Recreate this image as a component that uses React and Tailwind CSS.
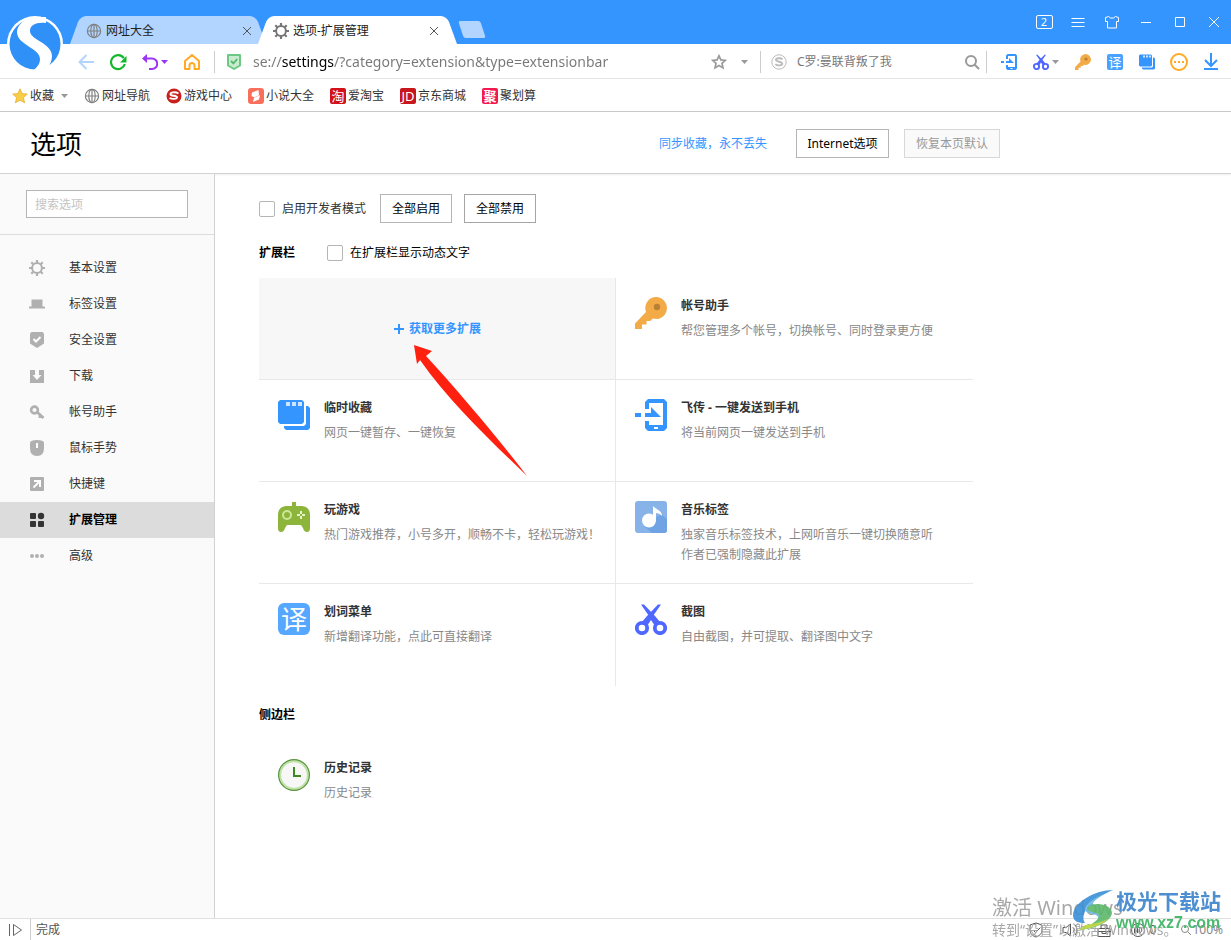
import { useState } from 'react';
import clsx from 'clsx';

const bookmarks = [
  { name: '网址导航', icon: <GlobeIcon /> },
  { name: '游戏中心', icon: <GameCenterIcon /> },
  { name: '小说大全', icon: <NovelIcon /> },
  { name: '爱淘宝', icon: <TextBadge className="bg-[#d3111b] text-[13px]">淘</TextBadge> },
  { name: '京东商城', icon: <TextBadge className="bg-[#c8161d] text-[13px]">JD</TextBadge> },
  { name: '聚划算', icon: <TextBadge className="bg-[#f5174f] text-[13px] font-bold">聚</TextBadge> },
];

const menu = [
  { id: 'basic', name: '基本设置', icon: <GearIcon className="size-4" /> },
  { id: 'tabs', name: '标签设置', icon: <TabShapeIcon /> },
  { id: 'security', name: '安全设置', icon: <ShieldSolidIcon /> },
  { id: 'download', name: '下载', icon: <DownloadBoxIcon /> },
  { id: 'account', name: '帐号助手', icon: <SmallKeyIcon /> },
  { id: 'gesture', name: '鼠标手势', icon: <MouseIcon /> },
  { id: 'shortcut', name: '快捷键', icon: <ShortcutIcon /> },
  { id: 'extension', name: '扩展管理', icon: <BlocksIcon /> },
  { id: 'advanced', name: '高级', icon: <DotsIcon /> },
];

const extensions = [
  { name: '帐号助手', lines: ['帮您管理多个帐号，切换帐号、同时登录更方便'], icon: <KeyIcon className="size-8" /> },
  { name: '临时收藏', lines: ['网页一键暂存、一键恢复'], icon: <StashIcon className="size-8" /> },
  { name: '飞传 - 一键发送到手机', lines: ['将当前网页一键发送到手机'], icon: <PhoneIcon className="size-8" /> },
  { name: '玩游戏', lines: ['热门游戏推荐，小号多开，顺畅不卡，轻松玩游戏！'], icon: <GamepadIcon /> },
  { name: '音乐标签', lines: ['独家音乐标签技术，上网听音乐一键切换随意听', '作者已强制隐藏此扩展'], icon: <MusicIcon /> },
  {
    name: '划词菜单',
    lines: ['新增翻译功能，点此可直接翻译'],
    icon: (
      <span className="flex size-8 items-center justify-center rounded-md bg-[#55a7ff] text-[26px] leading-8 text-white">
        译
      </span>
    ),
  },
  { name: '截图', lines: ['自由截图，并可提取、翻译图中文字'], icon: <ScissorsIcon className="size-8" /> },
];

export default function App() {
  return (
    <div className="flex min-h-screen flex-col bg-white font-['Noto_Sans','Noto_Sans_CJK_SC',sans-serif] text-xs text-[#333]">
      <header className="relative">
        <TitleBar />
        <Toolbar />
        <BookmarkBar />
        <LogoIcon />
      </header>

      <PageHeader />

      <div className="flex flex-1">
        <Sidebar />
        <Extensions />
      </div>

      <StatusBar />
      <Watermark />
    </div>
  );
}

function TitleBar() {
  return (
    <div className="flex h-11 items-end bg-[#3595ff] pl-[70px]">
      <Tab title="网址大全" icon={<GlobeIcon />} />
      <Tab title="选项-扩展管理" icon={<GearIcon className="size-4 text-[#777]" />} active />
      <button
        type="button"
        aria-label="新建标签"
        className="mb-1.5 ml-1 h-[17px] w-[22px] skew-x-[18deg] rounded-xs bg-[#b1d5ff]"
      />
      <div className="ml-auto flex h-full text-white">
        <WindowButton label="窗口">
          <span className="flex h-[14px] w-[17px] items-center justify-center rounded-xs border border-white text-[11px] leading-3">
            2
          </span>
        </WindowButton>
        <WindowButton label="菜单">
          <LineIcon d="M1.500 4.500h13M1.500 8.500h13M1.500 12.500h13" />
        </WindowButton>
        <WindowButton label="皮肤">
          <LineIcon d="M4.500 2.500l-3 1V7.500h2v6.500h9v-6.500h2v-4l-3-1-2 1.500h-3z" />
        </WindowButton>
        <WindowButton label="最小化">
          <LineIcon d="M3 8.500h10" />
        </WindowButton>
        <WindowButton label="最大化">
          <LineIcon d="M3.500 3.500h9v9h-9z" />
        </WindowButton>
        <WindowButton label="关闭">
          <LineIcon d="M3 3l10 10M13 3L3 13" />
        </WindowButton>
      </div>
    </div>
  );
}

function Tab({ title, icon, active }) {
  return (
    <div
      className={clsx(
        'relative isolate flex h-7 items-center gap-1 pt-0.5',
        'before:absolute before:inset-y-0 before:right-8 before:left-0 before:-z-10 before:origin-bottom before:-skew-x-[20deg] before:rounded-tl-md',
        'after:absolute after:inset-y-0 after:right-0 after:left-8 after:-z-10 after:origin-bottom after:skew-x-[20deg] after:rounded-tr-md',
        active
          ? '-ml-2 w-[199px] pr-[15px] pl-[15px] text-[#222] before:bg-white after:bg-white'
          : 'w-[196px] pr-[11px] pl-4 text-[#222] before:bg-[#b1d5ff] after:bg-[#b1d5ff]'
      )}
    >
      {icon}
      <span className="flex-1">{title}</span>
      <button type="button" aria-label={`关闭 ${title}`} className="text-[#555]">
        <LineIcon d="M4 4l8 8M12 4l-8 8" />
      </button>
    </div>
  );
}

function WindowButton({ label, children }) {
  return (
    <button type="button" aria-label={label} className="flex w-[34px] items-center justify-center">
      {children}
    </button>
  );
}

function ToolButton({ label, wide, children }) {
  return (
    <button
      type="button"
      aria-label={label}
      className={clsx('flex h-5 shrink-0 items-center', wide ? 'w-[26px] justify-between' : 'w-4 justify-center')}
    >
      {children}
    </button>
  );
}

function Toolbar() {
  const [url, setUrl] = useState('se://settings/?category=extension&type=extensionbar');

  return (
    <div className="flex h-[35px] items-center border-b border-[#e5e5e5] pt-px pl-[78px]">
      <div className="flex items-center gap-4">
        <ToolButton label="后退">
          <svg viewBox="0 0 16 16" className="size-4 shrink-0 text-[#b1d5ff]" fill="none" stroke="currentColor" strokeWidth="2">
            <path d="M8.500 1L1.500 8l7 7M2 8h14" />
          </svg>
        </ToolButton>
        <ToolButton label="刷新">
          <svg viewBox="0 0 18 18" className="size-[18px] shrink-0" fill="none" stroke="#12b72b" strokeWidth="2.200">
            <path d="M14.800 5.200A7 7 0 1 0 15.800 11" />
            <path d="M17.500 3v6.500H11z" fill="#12b72b" stroke="none" />
          </svg>
        </ToolButton>
        <ToolButton label="恢复标签" wide>
          <svg viewBox="0 0 16 16" className="size-4 shrink-0" fill="none" stroke="#9a35f5" strokeWidth="2">
            <path d="M3 4.500h7a4.800 4.800 0 0 1 0 10.500H7" />
            <path d="M0 4.500L5 0v9z" fill="#9a35f5" stroke="none" />
          </svg>
          <Caret className="text-[#9a35f5]" />
        </ToolButton>
        <ToolButton label="主页">
          <svg viewBox="0 0 16 16" className="size-4 shrink-0" fill="none" stroke="#ffaa22" strokeWidth="2">
            <path d="M1 7L8 1l7 6v8h-4.500v-3.500a2.500 2.500 0 0 0-5 0V15H1z" strokeLinejoin="round" />
          </svg>
        </ToolButton>
      </div>

      <Divider className="ml-3.5" />

      <div className="flex min-w-0 flex-1 items-center pl-3">
        <svg viewBox="0 0 14 16" className="h-4 w-3.5 shrink-0">
          <path d="M1 1h12v10.500L7 15l-6-3.500z" fill="#c9ecd0" stroke="#6cc882" strokeWidth="2" strokeLinejoin="round" />
          <path d="M4 7l2.400 2.400L10.200 5" fill="none" stroke="#52b96c" strokeWidth="1.800" />
        </svg>
        <input
          type="text"
          aria-label="地址"
          value={url}
          onChange={(event) => setUrl(event.target.value)}
          className="ml-3 min-w-0 flex-1 bg-[linear-gradient(to_right,#777_28px,#000_28px,#000_81px,#777_81px)] bg-clip-text text-sm text-transparent caret-black outline-none"
        />
        <button type="button" aria-label="收藏" className="text-[#999]">
          <svg viewBox="0 0 16 16" className="size-4" fill="none" stroke="currentColor" strokeWidth="1.700">
            <path d="M8 1.800l1.900 4.100 4.500.5-3.400 3 1 4.500L8 11.600l-4 2.300 1-4.500-3.400-3 4.500-.5z" />
          </svg>
        </button>
        <button type="button" aria-label="更多地址" className="mr-3 ml-3.5 text-[#999]">
          <Caret />
        </button>
      </div>

      <Divider />

      <div className="flex w-[225px] items-center pr-1.5 pl-2.5">
        <svg viewBox="0 0 16 16" className="size-4 shrink-0" fill="none" stroke="#bbb">
          <circle cx="8" cy="8" r="7.200" />
          <path d="M11.500 5.200C9.500 3.500 4.800 4 5 6c.2 2 6 1.500 6.200 3.600.1 2.100-4.700 2.400-6.900.7" strokeWidth="2" />
        </svg>
        <input
          type="text"
          aria-label="搜索"
          placeholder="C罗:曼联背叛了我"
          className="ml-2.5 min-w-0 flex-1 outline-none placeholder:text-[#777]"
        />
        <button type="button" aria-label="搜索网页" className="text-[#999]">
          <svg viewBox="0 0 16 16" className="size-4" fill="none" stroke="currentColor" strokeWidth="2">
            <circle cx="7" cy="7" r="5" />
            <path d="M10.500 10.500l4.500 4.500" />
          </svg>
        </button>
      </div>

      <Divider />

      <div className="flex items-center gap-4 pr-3 pl-3.5">
        <ToolButton label="飞传">
          <PhoneIcon className="size-4" />
        </ToolButton>
        <ToolButton label="截图" wide>
          <ScissorsIcon className="size-4" />
          <Caret className="text-[#999]" />
        </ToolButton>
        <ToolButton label="帐号助手">
          <KeyIcon className="size-4" />
        </ToolButton>
        <ToolButton label="翻译">
          <TextBadge className="bg-[#4ba1ff] text-[13px]">译</TextBadge>
        </ToolButton>
        <ToolButton label="临时收藏">
          <StashIcon className="size-4" />
        </ToolButton>
        <ToolButton label="更多扩展">
          <svg viewBox="0 0 18 18" className="size-[18px] shrink-0" fill="#ffaa22">
            <circle cx="9" cy="9" r="8" fill="none" stroke="#ffaa22" strokeWidth="2" />
            <path d="M4 8h2v2H4zM8 8h2v2H8zM12 8h2v2h-2z" />
          </svg>
        </ToolButton>
        <ToolButton label="下载">
          <svg viewBox="0 0 16 18" className="h-[18px] w-4 shrink-0" fill="none" stroke="#3595ff" strokeWidth="2">
            <path d="M8 0v12.500M2 7l6 6 6-6M1 16h14" />
          </svg>
        </ToolButton>
      </div>
    </div>
  );
}

function BookmarkBar() {
  return (
    <nav aria-label="收藏栏" className="flex h-[33px] items-center gap-4 border-b border-[#c8c8c8] pt-px pl-3">
      <button type="button" className="flex items-center">
        <svg viewBox="0 0 16 16" className="size-4">
          <path
            d="M8 .8l2.100 4.800 5.200.5-3.900 3.500 1.200 5.200L8 12.100l-4.600 2.700 1.200-5.200L.7 6.100l5.200-.5z"
            fill="#f9cd45"
            stroke="#e6ae2e"
            strokeWidth=".8"
          />
        </svg>
        <span className="ml-0.5 leading-5">收藏</span>
        <Caret className="ml-[7px] text-[#999]" />
      </button>
      {bookmarks.map((item) => (
        <a key={item.name} href="#" className="flex items-center gap-0.5 leading-5">
          {item.icon}
          {item.name}
        </a>
      ))}
    </nav>
  );
}

function PageHeader() {
  return (
    <div className="border-b border-[#d2d2d2] shadow-[0_1px_2px_#eee]">
      <div className="flex h-[61px] max-w-[1000px] items-center pt-0.5 pl-[30px]">
        <h1 className="flex-1 text-[26px] leading-8 text-black">选项</h1>
        <a href="#" className="mr-[29px] text-[#3595ff]">
          同步收藏，永不丢失
        </a>
        <button type="button" className="h-[29px] w-[93px] border border-[#b5b5b5] text-black">
          Internet选项
        </button>
        <button type="button" disabled className="ml-[15px] h-[29px] w-24 border border-[#d8d8d8] bg-[#fafafa] text-[#999]">
          恢复本页默认
        </button>
      </div>
    </div>
  );
}

function Sidebar() {
  const [current, setCurrent] = useState('extension');

  return (
    <aside className="w-[215px] shrink-0 border-r border-[#d2d2d2] bg-[#fafafa]">
      <div className="border-b border-[#ddd] py-4 pr-[26px] pl-[26px]">
        <input
          type="text"
          aria-label="搜索选项"
          placeholder="搜索选项"
          className="block h-7 w-full border border-[#b5b5b5] bg-white px-2 outline-none placeholder:text-[#c4c4c4]"
        />
      </div>
      <nav aria-label="选项分类" className="pt-[15px]">
        {menu.map((item) => {
          const active = item.id === current;
          return (
            <button
              key={item.id}
              type="button"
              onClick={() => setCurrent(item.id)}
              className={clsx(
                'flex h-9 w-full items-center gap-6 pl-[29px]',
                active ? 'bg-[#dcdcdc] font-bold text-black' : 'text-[#333]'
              )}
            >
              <span className={active ? 'text-[#333]' : 'text-[#b0b0b0]'}>{item.icon}</span>
              {item.name}
            </button>
          );
        })}
      </nav>
    </aside>
  );
}

function Extensions() {
  return (
    <main className="min-w-0 flex-1 pt-5 pl-11">
      <div className="flex items-center">
        <Checkbox id="dev-mode" label="启用开发者模式" />
        <button type="button" className="ml-3.5 h-[29px] w-[72px] border border-[#b5b5b5] text-black">
          全部启用
        </button>
        <button type="button" className="ml-3 h-[29px] w-[72px] border border-[#a5a5a5] text-black">
          全部禁用
        </button>
      </div>

      <section>
        <div className="mt-5 flex h-5 items-center text-black">
          <h2 className="w-[68px] font-bold">扩展栏</h2>
          <Checkbox id="dynamic-text" label="在扩展栏显示动态文字" />
        </div>
        <div className="relative mt-[15px] max-w-[714px]">
          <div className="grid grid-cols-2 *:h-[102px] *:border-[#e8e8e8] *:odd:border-r [&>*:nth-child(-n+6)]:border-b">
            <button type="button" className="flex items-center justify-center gap-1 bg-[#f7f7f7] font-bold text-[#3595ff]">
              <svg viewBox="0 0 12 12" className="size-3" fill="none" stroke="currentColor" strokeWidth="2">
                <path d="M6 1v10M1 6h10" />
              </svg>
              获取更多扩展
            </button>
            {extensions.map((item) => (
              <ExtensionItem key={item.name} {...item} />
            ))}
          </div>
          <PointerArrow />
        </div>
      </section>

      <section className="pt-5">
        <h2 className="leading-[18px] font-bold text-black">侧边栏</h2>
        <div className="mt-4 max-w-[357px]">
          <ExtensionItem name="历史记录" lines={['历史记录']} icon={<ClockIcon />} />
        </div>
      </section>
    </main>
  );
}

function ExtensionItem({ name, lines, icon }) {
  return (
    <article className="flex gap-3.5 pt-[19px] pl-[19px]">
      <div className="shrink-0">{icon}</div>
      <div>
        <h3 className="leading-[18px] font-bold">{name}</h3>
        <div className="mt-1.5 leading-5 text-[#888]">
          {lines.map((line) => (
            <p key={line}>{line}</p>
          ))}
        </div>
      </div>
    </article>
  );
}

function Checkbox({ id, label }) {
  return (
    <div className="flex items-center">
      <input
        id={id}
        type="checkbox"
        className="size-4 appearance-none rounded-xs border border-[#b5b5b5] bg-white checked:bg-[#3595ff]"
      />
      <label htmlFor={id} className="ml-[7px]">
        {label}
      </label>
    </div>
  );
}

function StatusBar() {
  return (
    <footer className="flex h-[22px] items-center border-t border-[#e0e0e0] pl-2 text-[#555]">
      <svg viewBox="0 0 16 14" className="h-3.5 w-4" fill="none" stroke="#666">
        <path d="M1.500 1v12M5.500 1.500v11L13.500 7z" />
      </svg>
      <Divider className="mr-[5px] ml-1.5" />
      <span>完成</span>
      <div className="ml-auto flex items-center gap-[18px] pr-2">
        <svg viewBox="0 0 16 16" className="size-4" fill="none" stroke="currentColor">
          <path d="M8 1l6 2v5c0 4-3 6-6 7-3-1-6-3-6-7V3zM5 8l2.500 2.500L12 6" />
        </svg>
        <svg viewBox="0 0 16 16" className="size-4" fill="none" stroke="currentColor">
          <path d="M1 5.500h3L8.500 2v12L4 10.500H1zM11 5.500c1.500 1.500 1.500 3.500 0 5M13 3c2.500 3 2.500 7 0 10" />
        </svg>
        <svg viewBox="0 0 16 16" className="size-4" fill="none" stroke="currentColor">
          <path d="M2 6.500h12v8H2zM5 6V3h6v3M1 9.500h14M6 9v2.500h4V9" />
        </svg>
        <span className="flex items-center gap-1">
          <svg viewBox="0 0 16 16" className="size-4" fill="none" stroke="currentColor">
            <circle cx="8" cy="8" r="6.500" />
            <path d="M4.500 11V7a1.500 1.500 0 0 1 3 0v4M4.500 9h3M9.500 5.500v5c3 0 3-5 0-5z" />
          </svg>
          0
        </span>
        <span className="flex items-center pl-1.5 text-[#888]">
          <svg viewBox="0 0 12 12" className="size-3" fill="none" stroke="currentColor">
            <circle cx="5" cy="5" r="3.500" />
            <path d="M7.500 7.500L11 11" />
          </svg>
          100%
        </span>
      </div>
    </footer>
  );
}

function Watermark() {
  return (
    <div className="pointer-events-none fixed right-0 bottom-0 h-[52px] w-[239px] overflow-hidden">
      <div className="whitespace-nowrap text-[#a8a8a8]">
        <p className="pt-2 text-xl leading-6">激活 Windows</p>
        <p className="text-sm leading-5">转到“设置”以激活 Windows。</p>
      </div>
      <div className="absolute top-0 right-2.5 flex items-start gap-px">
        <svg viewBox="0 0 44 44" className="h-11 w-11 opacity-90">
          <path d="M42 2C24 2 3 14 2 27c0 7 6 8 12 8C8 26 20 11 42 2z" fill="#3a8fd6" />
          <path d="M38 4C26 8 15 15 14 21c-1 5 12 4 13 8 1 3-3 6-8 9 10-1 17-8 17-14-1-5-14-4-14-8 0-3 6-8 16-12z" fill="#6ab7e8" />
          <path d="M26 16c7 0 15 3 15 9-1 9-17 16-33 17 9-4 20-9 20-14 0-4-8-3-11-6-2-3 3-6 9-6z" fill="#5cb86a" />
          <path d="M8 42c12-1 25-6 30-12-6 4-16 6-24 7z" fill="#b9d53c" />
        </svg>
        <div className="whitespace-nowrap font-bold">
          <p className="text-[21px] leading-[26px] text-[#4d8fd0]">极光下载站</p>
          <p className="font-['Liberation_Sans',sans-serif] text-base leading-[18px] text-[#4bb96e]">www.xz7.com</p>
        </div>
      </div>
    </div>
  );
}

/* icons */

function Divider({ className }) {
  return <span className={clsx('h-[22px] w-px shrink-0 bg-[#ccc]', className)} />;
}

function Caret({ className }) {
  return (
    <svg viewBox="0 0 7 4" className={clsx('h-1 w-[7px] shrink-0', className)} fill="currentColor">
      <path d="M0 0h7L3.500 4z" />
    </svg>
  );
}

function LineIcon({ d }) {
  return (
    <svg viewBox="0 0 16 16" className="size-4" fill="none" stroke="currentColor">
      <path d={d} />
    </svg>
  );
}

function TextBadge({ className, children }) {
  return (
    <span
      className={clsx('flex size-4 shrink-0 items-center justify-center rounded-xs leading-4 text-white', className)}
    >
      {children}
    </span>
  );
}

function LogoIcon() {
  return (
    <svg viewBox="0 0 56 56" className="absolute top-4 left-[7px] size-14">
      <circle cx="28" cy="28" r="28" fill="#fff" />
      <circle cx="28" cy="28" r="25.500" fill="#2f90f8" />
      <path
        d="M26 1C17 3 10 9 10 16c0 13 23 16 23 27 0 5-3 8-6 11l12 0c4-5 6-9 6-14 0-13-22-16-22-25 0-6 6-9 16-8V1z"
        fill="#fff"
      />
    </svg>
  );
}

function GlobeIcon() {
  return (
    <svg viewBox="0 0 16 16" className="size-4 shrink-0" fill="none" stroke="#808080" strokeWidth="1.200">
      <circle cx="8" cy="8" r="6.600" />
      <ellipse cx="8" cy="8" rx="3.200" ry="6.600" />
      <path d="M8 1.500v13M1.500 8h13" />
    </svg>
  );
}

function GearIcon({ className }) {
  return (
    <svg viewBox="0 0 16 16" className={clsx('shrink-0', className)} fill="none" stroke="currentColor">
      <circle cx="8" cy="8" r="4.900" strokeWidth="2" />
      <path
        d="M8 0v3M8 13v3M0 8h3M13 8h3M2.300 2.300l2 2M11.700 11.700l2 2M2.300 13.700l2-2M11.700 4.300l2-2"
        strokeWidth="2.200"
      />
    </svg>
  );
}

function GameCenterIcon() {
  return (
    <svg viewBox="0 0 16 16" className="size-4 shrink-0">
      <circle cx="8" cy="8" r="7.500" fill="#c9211a" />
      <path d="M12.500 5.500C9 3.500 4 4.200 4.500 6.500c.4 1.800 6.500.6 6.500 2.800 0 2-5 2-7.500.7" fill="none" stroke="#fff" strokeWidth="1.900" />
    </svg>
  );
}

function NovelIcon() {
  return (
    <svg viewBox="0 0 16 16" className="size-4 shrink-0">
      <rect width="16" height="16" rx="3" fill="#f8705c" />
      <path d="M10.500 2L4 4.500 3.500 8l3 1.500L11 7zM12 7L6 10l-1 4 6-2.500z" fill="#fff" />
    </svg>
  );
}

function TabShapeIcon() {
  return (
    <svg viewBox="0 0 16 16" className="size-4" fill="currentColor">
      <path d="M2.500 3.500h11v7H16v2H0v-2h2.500z" />
    </svg>
  );
}

function ShieldSolidIcon() {
  return (
    <svg viewBox="0 0 16 16" className="size-4" fill="currentColor">
      <path d="M2.500 0h11L15 1.500v10L8 16l-7-4.500v-10z" />
      <path d="M4.500 7L7 9.500l4.500-4.500" fill="none" stroke="#fff" strokeWidth="2" />
    </svg>
  );
}

function DownloadBoxIcon() {
  return (
    <svg viewBox="0 0 16 16" className="size-4" fill="currentColor">
      <path d="M1 2h14v13H1z" />
      <path d="M6 2h4v5h2.500L8 12 3.500 7H6z" fill="#fafafa" />
    </svg>
  );
}

function SmallKeyIcon() {
  return (
    <svg viewBox="0 0 16 16" className="size-4" fill="none" stroke="currentColor">
      <circle cx="5.500" cy="6" r="3.400" strokeWidth="2.600" />
      <path d="M8 8l6.500 6M11 11v3" strokeWidth="2.800" />
    </svg>
  );
}

function MouseIcon() {
  return (
    <svg viewBox="0 0 16 16" className="size-4" fill="currentColor">
      <path d="M1 2.500Q1.500 0 8 0t7 2.500V8q0 8-7 8T1 8z" />
      <path d="M7 3h2v5H7z" fill="#fff" />
    </svg>
  );
}

function ShortcutIcon() {
  return (
    <svg viewBox="0 0 16 16" className="size-4" fill="currentColor">
      <rect x="1" y="1" width="14" height="14" rx="1" />
      <path d="M5 5h6v6M11 5l-6.500 6.500" fill="none" stroke="#fff" strokeWidth="2" />
    </svg>
  );
}

function BlocksIcon() {
  return (
    <svg viewBox="0 0 16 16" className="size-4" fill="currentColor">
      <rect x="1" y="1" width="6" height="6" rx="1" />
      <circle cx="12" cy="4" r="3.200" />
      <rect x="1" y="9" width="6" height="6" rx="1" />
      <rect x="9" y="9" width="6" height="6" rx="1" />
    </svg>
  );
}

function DotsIcon() {
  return (
    <svg viewBox="0 0 16 16" className="size-4" fill="currentColor">
      <circle cx="3" cy="8" r="2" />
      <circle cx="8" cy="8" r="2" />
      <circle cx="13" cy="8" r="2" />
    </svg>
  );
}

function KeyIcon({ className }) {
  return (
    <svg viewBox="0 0 32 32" className={clsx('shrink-0', className)}>
      <path
        d="M21 0a11 11 0 1 1-3 21.600L15 24h-3.500v3.500H7V32H0v-5.500L11 15A11 11 0 0 1 21 0z"
        fill="#f3ab48"
      />
      <circle cx="22" cy="10" r="3.200" fill="#b98135" />
    </svg>
  );
}

function StashIcon({ className }) {
  return (
    <svg viewBox="0 0 32 32" className={clsx('shrink-0', className)} fill="#3595ff">
      <path d="M2 1h22l2 2v20l-2 2H2l-2-2V3zM28 7h2l2 2v20l-2 2H8l-2-2v-2h20l2-2z" />
      <path d="M8 3h4v4H8zM14 3h4v4h-4zM20 3h4v4h-4z" fill="#cfe5ff" />
    </svg>
  );
}

function PhoneIcon({ className }) {
  return (
    <svg viewBox="0 0 32 32" className={clsx('shrink-0', className)} fill="#3595ff">
      <path d="M13 0h16l3 3v26l-3 3H13l-3-3v-7h4v4h14V4H14v6h-4V3z" />
      <path d="M0 14h6v4H0zM10 14h6V8l10 10H10z" />
      <path d="M19 28h4v2h-4z" fill="#fff" />
    </svg>
  );
}

function ScissorsIcon({ className }) {
  return (
    <svg viewBox="0 0 32 32" className={clsx('shrink-0', className)} fill="none" stroke="#4f68ff">
      <circle cx="7" cy="25" r="5.200" strokeWidth="3.800" />
      <circle cx="25" cy="25" r="5.200" strokeWidth="3.800" />
      <path d="M6 1.500h3L20 13l5 6-5 4-4-6-4 6-5-4 5-6L23 1.500h3L18 13h-4z" fill="#4f68ff" stroke="none" />
    </svg>
  );
}

function GamepadIcon() {
  return (
    <svg viewBox="0 0 32 32" className="size-8">
      <path
        d="M14 1h4v4h6q8 1 8 9v13q0 4-3 4-3 0-4-4l-2-3H9l-2 3q-1 4-4 4-3 0-3-4V14q0-8 8-9h6z"
        fill="#8db53c"
      />
      <circle cx="9" cy="14" r="4" fill="none" stroke="#cde79a" strokeWidth="2" />
      <path d="M23 10v3M23 15v3M19 14h3M24 14h3" stroke="#e6f5c8" strokeWidth="2" />
    </svg>
  );
}

function MusicIcon() {
  return (
    <svg viewBox="0 0 32 32" className="size-8">
      <rect width="32" height="32" rx="3" fill="#88b3e8" />
      <path d="M26 13l6 5v11q0 3-3 3H17L9 25z" fill="#6fa3e3" />
      <circle cx="14" cy="19.500" r="7" fill="#fff" />
      <path d="M18 5c2 3 9 4 9 10-2-2-4-3-6-3v8h-3z" fill="#fff" />
    </svg>
  );
}

function ClockIcon() {
  return (
    <svg viewBox="0 0 32 32" className="size-8">
      <circle cx="16" cy="16" r="15.400" fill="#bfe3a6" stroke="#5a9440" strokeWidth="1.200" />
      <circle cx="16" cy="16" r="12.800" fill="#f7f7f7" />
      <path d="M16 8v9h7" fill="none" stroke="#3c8a20" strokeWidth="2" />
    </svg>
  );
}

function PointerArrow() {
  return (
    <svg viewBox="0 0 114 134" className="pointer-events-none absolute top-[67px] left-[155px] h-[134px] w-[114px]">
      <path d="M0 0l18 6-6 5c35 38 70 80 101 120-37-36-77-73-107-116l-3 4z" fill="#ff2010" />
    </svg>
  );
}
